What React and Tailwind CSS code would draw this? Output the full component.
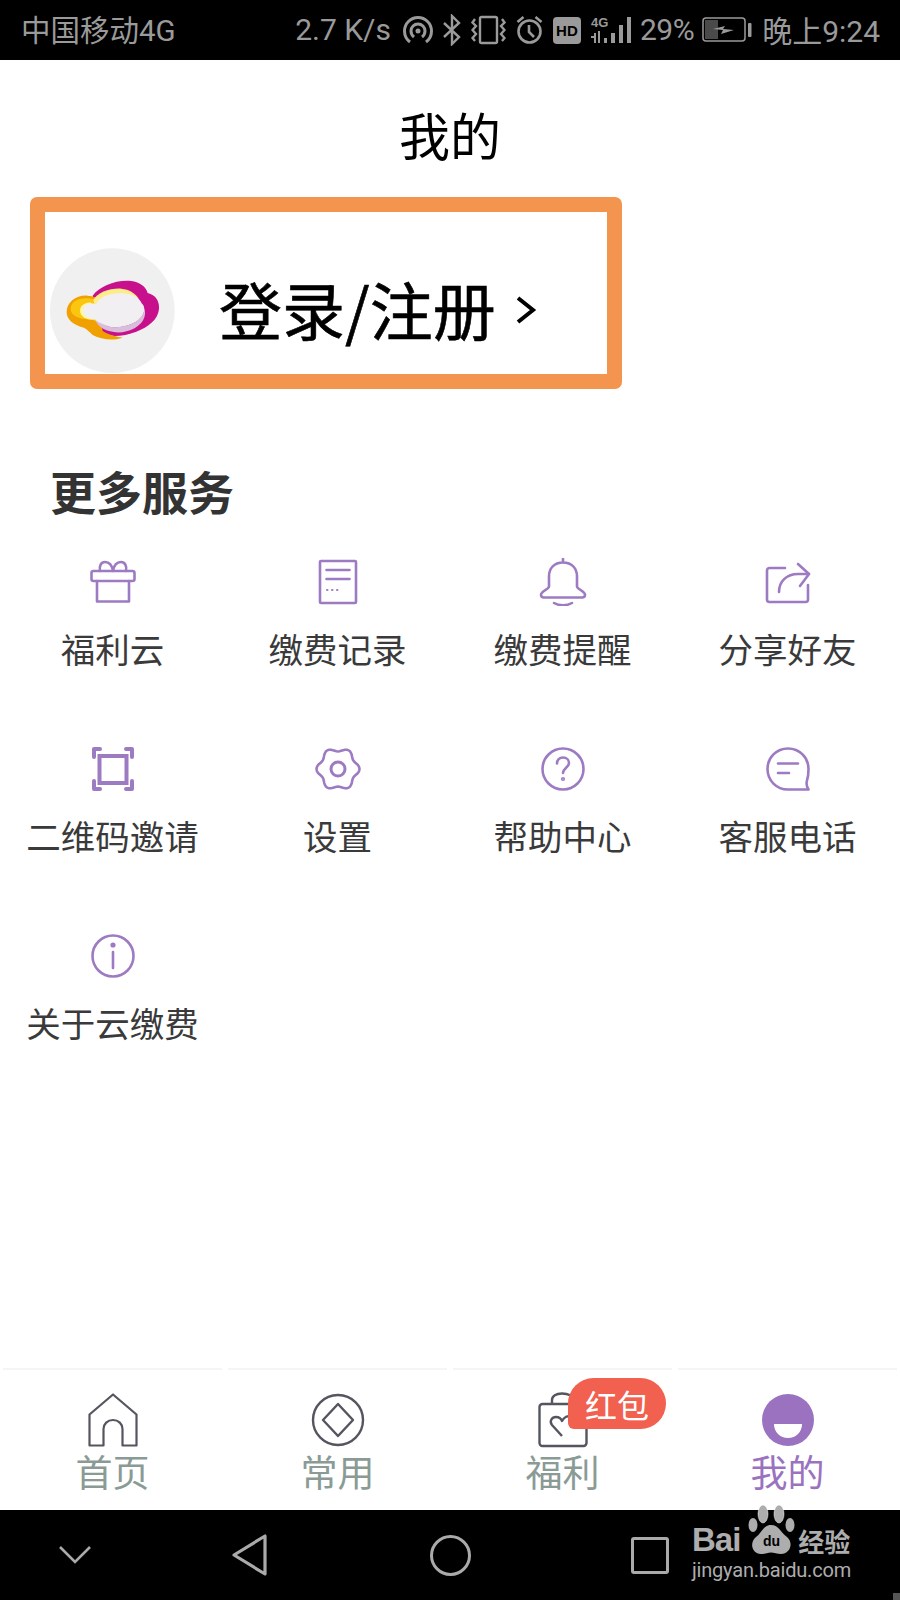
import React from "react";

const cjk = "font-['Noto_Sans_CJK_SC','Noto_Sans',sans-serif]";

function Svg({ children, size = 48, className = "" }) {
  return (
    <svg width={size} height={size} viewBox="0 0 48 48" fill="none" stroke="#9d7bc2" strokeWidth="2.6" strokeLinecap="round" strokeLinejoin="round" className={className}>
      {children}
    </svg>
  );
}

// wavy six lobed outline of the settings gear
const gearPath = Array.from({ length: 72 }, (_, i) => {
  const a = (i * 5 * Math.PI) / 180;
  const r = 19.5 + 2 * Math.cos(6 * a);
  return `${i === 0 ? "M" : "L"}${(24 + r * Math.cos(a)).toFixed(2)} ${(24 + r * Math.sin(a)).toFixed(2)}`;
}).join("") + "z";

const icons = {
  gift: (
    <Svg>
      <rect x="2.5" y="13" width="43" height="10" rx="2" />
      <path d="M8 23v20.500h32V23" />
      <path d="M24 13c-1-6-4-9-8-9-4 0-6 4-5 9M24 13c1-6 4-9 8-9 4 0 6 4 5 9" />
    </Svg>
  ),
  doc: (
    <Svg>
      <rect x="6" y="3" width="36" height="42" rx="1" />
      <path d="M12.5 12h23M12.5 21h23" />
      <path d="M13 32h.5M18 32h.5M23 32h.5" strokeWidth="2" />
    </Svg>
  ),
  bell: (
    <Svg>
      <path d="M24 2v4M24 6c-9 0-14 6.500-14 15v11c0 3-8 5-8 9 0 1.500 1 3 3 3h38c2 0 3-1.500 3-3 0-4-8-6-8-9V21c0-8.500-5-15-14-15z" transform="translate(0 -1) scale(1 0.92)" />
      <path d="M15 45c5 3 13 3 18 0" />
    </Svg>
  ),
  share: (
    <Svg>
      <path d="M21 10H5.500A2.500 2.500 0 0 0 3 12.500v29A2.500 2.500 0 0 0 5.500 44h36a2.500 2.500 0 0 0 2.500-2.500V27" />
      <path d="M15 34c0-11 8-18 19-18h11" />
      <path d="M34 6l11 10-9 12" />
    </Svg>
  ),
  scan: (
    <Svg>
      <rect x="10.500" y="11" width="27" height="27" strokeWidth="4" strokeLinecap="butt" strokeLinejoin="miter" />
      <path d="M5 12V4h6M43 12V4h-6M5 36v8h6M43 36v8h-6" strokeWidth="4" />
    </Svg>
  ),
  gear: (
    <Svg>
      <path d={gearPath} />
      <circle cx="24" cy="24" r="7" strokeWidth="3" />
    </Svg>
  ),
  help: (
    <Svg>
      <circle cx="24" cy="24" r="20.500" />
      <path d="M18 18.500c0-3.500 2.500-6 6-6s6 2.500 6 5.500c0 4.500-6 5-6 10" />
      <circle cx="24" cy="34" r="0.800" />
    </Svg>
  ),
  chat: (
    <Svg>
      <path d="M24 3.500C12.500 3.500 3.500 12.500 3.500 24S12.500 44.500 24 44.500h20.500c-2-3-2.500-5.500-1.500-9 1-3 1.500-6.500 1.500-11.500C44.500 12.500 35.500 3.500 24 3.500z" />
      <path d="M14 18.500h20M14 28h11" />
    </Svg>
  ),
  info: (
    <Svg>
      <circle cx="24" cy="24" r="20.500" />
      <circle cx="24" cy="13" r="1.300" fill="#9d7bc2" />
      <path d="M24 20v16" />
    </Svg>
  ),
};

const services = [
  ["gift", "福利云"],
  ["doc", "缴费记录"],
  ["bell", "缴费提醒"],
  ["share", "分享好友"],
  ["scan", "二维码邀请"],
  ["gear", "设置"],
  ["help", "帮助中心"],
  ["chat", "客服电话"],
  ["info", "关于云缴费"],
];

function CloudLogo() {
  return (
    <svg width="125" height="125" viewBox="30 22 375 375">
      <circle cx="217" cy="210" r="187" fill="#f0f0f0" />
      <path d="M158 165c20-28 70-48 115-44 28 3 45 18 50 36 24 6 36 24 34 48-3 32-32 54-68 68-38 15-82 18-108 4z" fill="#c8108c" />
      <path d="M80 215c0-30 28-52 62-50 10 0 18 2 26 6l20 100c20 12 45 18 60 20-30 10-62 6-90-8-8-8-16-16-26-22-30-6-52-24-52-46z" fill="#f0a000" />
      <path d="M92 205c0-22 24-34 50-32 14 0 24 4 30 8l10 60c-8 4-16 2-24-4-30 0-66-8-66-32z" fill="#fbc60f" />
      <path d="M160 178c12-22 50-36 84-34 24 2 42 14 52 30l-60 34-70-10z" fill="#fdec8a" />
      <path d="M120 210c0-14 14-26 34-24l14 50c-26 4-48-8-48-26z" fill="#fdf6a8" />
      <path d="M165 236C175 270 235 290 285 262 315 245 325 215 305 188 318 200 315 222 295 238 270 258 225 265 200 255z" fill="#d9bedb" />
      <path d="M130 206C130 192 150 186 168 190 180 165 215 155 250 158 280 160 298 172 305 188 318 200 315 222 295 238 270 258 225 265 200 255 185 250 172 244 165 236 145 238 130 224 130 206z" fill="#f1eff2" />
    </svg>
  );
}

function StatusIcons() {
  return (
    <>
      {/* hotspot */}
      <svg width="30" height="30" viewBox="0 0 30 30" fill="none" stroke="#9a9a9a" strokeWidth="3" className="ml-[12px]">
        <path d="M7 27C3 24 1.500 20 1.500 16a13.500 13.500 0 0 1 27 0c0 4-1.500 8-5.500 11" />
        <path d="M11 22c-2-1.500-3-3.500-3-6a7 7 0 0 1 14 0c0 2.500-1 4.500-3 6" />
        <circle cx="15" cy="16" r="2.500" fill="#9a9a9a" stroke="none" />
      </svg>
      {/* bluetooth */}
      <svg width="18" height="32" viewBox="0 0 18 32" fill="none" stroke="#9a9a9a" strokeWidth="2.400" className="ml-[10px]">
        <path d="M1 9l15 14-7 7V2l7 7L1 23" />
      </svg>
      {/* vibrate */}
      <svg width="35" height="30" viewBox="0 0 35 30" fill="none" stroke="#9a9a9a" strokeWidth="2.400" className="ml-[10px]">
        <rect x="9" y="2" width="17" height="26" rx="1.500" />
        <path d="M4 4L1.500 7.500 5 11 1.500 15 5 19l-3.500 4L4 26M31 4l2.500 3.500L30 11l3.500 4L30 19l3.500 4L31 26" />
      </svg>
      {/* alarm */}
      <svg width="27" height="30" viewBox="0 0 27 30" fill="none" stroke="#9a9a9a" strokeWidth="2.600" className="ml-[10px]">
        <circle cx="13.500" cy="16.500" r="11" />
        <path d="M13 10v7l5 5M1.500 7l6-5M25.500 7l-6-5" />
      </svg>
      <div className="ml-[10px] flex h-[27px] w-[28px] items-center justify-center rounded-[4px] bg-[#9a9a9a] font-['Liberation_Sans',sans-serif] text-[15px] leading-none font-bold text-black">
        HD
      </div>
      {/* 4G + signal */}
      <svg width="46" height="30" viewBox="0 0 46 30" className="ml-[9px]" fill="#9a9a9a">
        <text x="1" y="12" fontSize="13" fontWeight="700" fontFamily="Liberation Sans">4G</text>
        <path d="M5 18v10M9 16v12M1 22h3" stroke="#9a9a9a" strokeWidth="2" />
        <rect x="14" y="23" width="3" height="5" />
        <rect x="21" y="18" width="4" height="10" />
        <rect x="29" y="10" width="4" height="18" />
        <rect x="37" y="2" width="4" height="26" />
      </svg>
      <span className="ml-[4px] font-['Roboto',sans-serif] text-[30px] leading-none tracking-[-0.5px]">29%</span>
      {/* battery */}
      <svg width="50" height="26" viewBox="0 0 50 26" className="ml-[8px]" fill="none">
        <rect x="1" y="1" width="42" height="23" rx="3" stroke="#9a9a9a" strokeWidth="1.500" />
        <rect x="3" y="3" width="13" height="19" fill="#4a4a4a" />
        <path d="M11 12l12-3-2 3 11 1-13 4 2-4z" fill="#9a9a9a" />
        <rect x="46" y="6" width="3.500" height="14" rx="1" fill="#9a9a9a" />
      </svg>
      <span className={`ml-[10px] text-[30px] leading-none ${cjk}`}>晚上<span className="font-['Roboto',sans-serif]">9:24</span></span>
    </>
  );
}

function NavIcon({ name }) {
  if (name === "home")
    return (
      <svg width="50" height="54" viewBox="0 0 50 54" fill="none" stroke="#55555f" strokeWidth="2.200" strokeLinejoin="round">
        <path d="M1.500 52.500V21.500L25 1.500l23.500 20v31h-14V36c0-5-4-9-9.500-9s-9.500 4-9.500 9v16.500z" />
      </svg>
    );
  if (name === "star")
    return (
      <svg width="54" height="54" viewBox="0 0 54 54" fill="none" stroke="#55555f" strokeWidth="2.400" strokeLinejoin="round">
        <circle cx="27" cy="27" r="25" />
        <path d="M27 11l15 16-15 16-15-16z" />
      </svg>
    );
  if (name === "bag")
    return (
      <svg width="50" height="56" viewBox="0 0 50 56" fill="none" stroke="#55555f" strokeWidth="2.400" strokeLinejoin="round">
        <rect x="1.500" y="12" width="47" height="42" rx="3" />
        <path d="M14 12V8c0-4 4-6.500 10-6.500S36 4 36 8v4" />
        <path d="M24 44L14 33c-3-4 0-8 4-8 3 0 5 1.500 6 4 2-4 6-6 9-4" />
      </svg>
    );
  return (
    <svg width="52" height="54" viewBox="0 0 52 54">
      <circle cx="26" cy="27" r="26" fill="#9b72c0" />
      <path d="M12 31h28c0 8-6 14-14 14s-14-6-14-14z" fill="#fff" />
    </svg>
  );
}

const tabs = [
  ["home", "首页"],
  ["star", "常用"],
  ["bag", "福利"],
  ["me", "我的"],
];

export default function App() {
  return (
    <div className={`flex h-[1600px] w-[900px] flex-col overflow-hidden bg-white ${cjk}`}>
      <div className="flex h-[60px] shrink-0 items-center justify-between bg-black pr-[20px] pl-[21px] text-[#9a9a9a]">
        <span className="text-[29.500px] leading-none">
          中国移动<span className="font-['Roboto',sans-serif]">4G</span>
        </span>
        <div className="flex items-center">
          <span className="font-['Roboto',sans-serif] text-[30px] leading-none">2.7 K/s</span>
          <StatusIcons />
        </div>
      </div>

      <main className="flex-1">
        <h1 className="pt-[44px] text-center text-[51px] leading-[60px] font-normal text-black">我的</h1>

        <div className="mt-[33px] ml-[30px] flex h-[192px] w-[592px] items-center rounded-[7px] border-[15px] border-[#f3944f] pt-[34px] pl-[5px]">
          <div className="h-[125px] w-[125px] shrink-0">
            <CloudLogo />
          </div>
          <span className="mb-[6px] ml-[44px] text-[63px] leading-none text-black [-webkit-text-stroke:0.6px_#000]">登录/注册</span>
          <svg width="22" height="28" viewBox="0 0 22 28" fill="none" stroke="#000" strokeWidth="4" className="ml-[19px]">
            <path d="M3 2l15 12L3 26" />
          </svg>
        </div>

        <h2 className="mt-[71px] ml-[50px] text-[46px] leading-[60px] font-bold text-[#333]">更多服务</h2>

        <div className="mt-[38px] grid grid-cols-4 gap-y-[72px]">
          {services.map(([icon, label]) => (
            <div key={label} className="flex flex-col items-center">
              {icons[icon]}
              <span className="mt-[17px] text-[34.500px] leading-[50px] whitespace-nowrap text-[#3a3a3a]">{label}</span>
            </div>
          ))}
        </div>
      </main>

      <nav className="grid h-[142px] shrink-0 grid-cols-4">
        {tabs.map(([name, label]) => (
          <div key={name} className="relative mx-[3px] flex flex-col items-center border-t-2 border-[#f5f5f5] pt-[22px]">
            <div className="flex h-[56px] items-center">
              <NavIcon name={name} />
            </div>
            <span className={`mt-[1px] text-[37px] leading-[44px] ${name === "me" ? "text-[#9b72c0]" : "text-[#8a9b95]"}`}>{label}</span>
            {name === "bag" && (
              <div className="absolute top-[8px] left-[115px] flex h-[51px] w-[98px] items-center justify-center rounded-[26px] rounded-bl-[6px] bg-[#f2604f] text-[32px] leading-none text-white">
                红包
              </div>
            )}
          </div>
        ))}
      </nav>

      <div className="relative grid h-[90px] shrink-0 grid-cols-[150px_200px_200px_200px] items-center bg-black">
        <div className="flex justify-center">
          <svg width="34" height="20" viewBox="0 0 34 20" fill="none" stroke="#aaa" strokeWidth="2.600">
            <path d="M2 2l15 15L32 2" />
          </svg>
        </div>
        <div className="flex justify-center">
          <svg width="36" height="42" viewBox="0 0 36 42" fill="none" stroke="#aaa" strokeWidth="3.200" strokeLinejoin="round">
            <path d="M33 2v38L2 21z" />
          </svg>
        </div>
        <div className="flex justify-center">
          <div className="h-[41px] w-[41px] rounded-full border-[3px] border-[#aaa]" />
        </div>
        <div className="flex justify-center">
          <div className="h-[37px] w-[38px] rounded-[3px] border-[3.500px] border-[#aaa]" />
        </div>

        {/* watermark */}
        <div className="absolute top-[15px] left-[692px] text-[#adadad]">
          <div className="flex items-end">
            <span className="font-['Liberation_Sans',sans-serif] text-[33px] leading-[30px] font-bold tracking-[-1px]">Bai</span>
            <svg width="48" height="50" viewBox="0 0 48 50" className="mt-[-20px] mb-0 ml-[8px]">
              <ellipse cx="15" cy="9" rx="5" ry="9" fill="#adadad" stroke="#fff" strokeWidth="0.500" />
              <ellipse cx="31" cy="9" rx="5" ry="9" fill="#adadad" stroke="#fff" strokeWidth="0.500" />
              <ellipse cx="5" cy="20" rx="4.500" ry="7" fill="#adadad" />
              <ellipse cx="42" cy="20" rx="4.500" ry="7" fill="#adadad" />
              <path d="M23 20c8 0 10 8 16 12 7 6 3 17-6 17-4 0-7-1.500-10-1.500S17 49 13 49C4 49 1 38 8 32c6-4 7-12 15-12z" fill="#adadad" />
              <text x="23.500" y="41" textAnchor="middle" fontSize="14" fontWeight="700" fontFamily="Liberation Sans" fill="#000">du</text>
            </svg>
            <span className="ml-[2px] text-[26px] leading-[28px] font-bold">经验</span>
          </div>
          <div className="mt-[5px] font-['Roboto',sans-serif] text-[20px] leading-[20px] tracking-[-0.2px] whitespace-nowrap">jingyan.baidu.com</div>
        </div>
        <div className="absolute right-0 bottom-0 h-[7px] w-[7px] bg-[#555]" />
      </div>
    </div>
  );
}
